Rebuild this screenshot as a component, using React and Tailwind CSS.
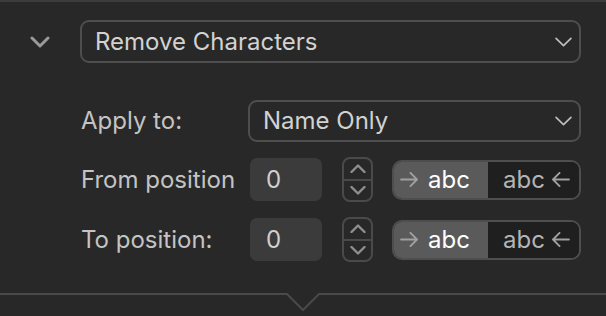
import React from "react";

function ChevronDown({ className }) {
  return (
    <svg viewBox="0 0 16 9" className={className} fill="none">
      <path d="M1 1 L8 8 L15 1" stroke="currentColor" strokeWidth="1.6" strokeLinecap="round" strokeLinejoin="round" />
    </svg>
  );
}

function Select({ label, className }) {
  return (
    <div className={`flex items-center justify-between rounded-[9px] border-2 border-[#4e4e4e] pl-[13px] pr-[7px] ${className}`}>
      <span className="text-[24px] leading-none text-[#d2d2d2]">{label}</span>
      <ChevronDown className="w-[17px] h-[10px] text-[#bdbdbd]" />
    </div>
  );
}

function Stepper() {
  return (
    <div className="flex flex-col w-[31px] h-[45px] rounded-[8px] border-2 border-[#4a4a4a]">
      <div className="flex-1 flex items-center justify-center border-b-2 border-[#4a4a4a]">
        <svg viewBox="0 0 16 9" className="w-[16px] h-[9px] text-[#8f8f8f]" fill="none">
          <path d="M1.5 8 L8 1.5 L14.5 8" stroke="currentColor" strokeWidth="2.4" strokeLinecap="round" strokeLinejoin="round" />
        </svg>
      </div>
      <div className="flex-1 flex items-center justify-center">
        <svg viewBox="0 0 16 9" className="w-[16px] h-[9px] text-[#8f8f8f]" fill="none">
          <path d="M1.5 1 L8 7.5 L14.5 1" stroke="currentColor" strokeWidth="2.4" strokeLinecap="round" strokeLinejoin="round" />
        </svg>
      </div>
    </div>
  );
}

function ArrowRight({ className }) {
  return (
    <svg viewBox="0 0 20 16" className={className} fill="none">
      <path d="M1 8 H18 M11 1 L18 8 L11 15" stroke="currentColor" strokeWidth="2" strokeLinecap="round" strokeLinejoin="round" />
    </svg>
  );
}

function ArrowLeft({ className }) {
  return (
    <svg viewBox="0 0 20 16" className={className} fill="none">
      <path d="M19 8 H2 M9 1 L2 8 L9 15" stroke="currentColor" strokeWidth="2" strokeLinecap="round" strokeLinejoin="round" />
    </svg>
  );
}

function Segmented() {
  return (
    <div className="flex w-[189px] h-[40px] rounded-[10px] border-2 border-[#4e4e4e] overflow-hidden">
      <div className="w-[94px] bg-[#5a5a5a] flex items-center pl-[6px] gap-[9px]">
        <ArrowRight className="w-[19px] h-[15px] text-[#a0a0a0]" />
        <span className="text-[24px] leading-none text-white">abc</span>
      </div>
      <div className="flex-1 bg-[#1f1f1f] flex items-center pl-[15px] gap-[6px]">
        <span className="text-[24px] leading-none text-[#b4b4b4]">abc</span>
        <ArrowLeft className="w-[19px] h-[15px] text-[#a0a0a0]" />
      </div>
    </div>
  );
}

function PositionRow({ label }) {
  return (
    <div className="flex items-center h-[45px]">
      <span className="w-[169px] text-[24px] leading-none text-[#c4c4c4]">{label}</span>
      <div className="w-[72px] h-[43px] rounded-[7px] bg-[#3b3b3b] flex items-center pl-[16px] text-[24px] leading-none text-[#cfcfcf]">
        0
      </div>
      <div className="ml-[20px]">
        <Stepper />
      </div>
      <div className="ml-[19px]">
        <Segmented />
      </div>
    </div>
  );
}

export default function App() {
  return (
    <div
      className="w-[606px] h-[316px] bg-[#282828] overflow-hidden border-t-2 border-[#3c3c3c]"
      style={{ fontFamily: "Inter, 'Noto Sans', sans-serif" }}
    >
      <div className="flex items-center mt-[18px] h-[43px]">
        <div className="w-[80px] flex justify-start pl-[30px]">
          <svg viewBox="0 0 20 12" className="w-[20px] h-[12px] text-[#9a9a9a]" fill="none">
            <path d="M2 2 L10 10 L18 2" stroke="currentColor" strokeWidth="3" strokeLinecap="round" strokeLinejoin="round" />
          </svg>
        </div>
        <Select label="Remove Characters" className="w-[501px] h-[43px]" />
      </div>

      <div className="pl-[81px] mt-[37px] flex flex-col">
        <div className="flex items-center h-[42px]">
          <span className="w-[167px] text-[24px] leading-none text-[#c4c4c4]">Apply to:</span>
          <Select label="Name Only" className="w-[333px] h-[42px]" />
        </div>
        <div className="mt-[15px] flex flex-col gap-[15px]">
          <PositionRow label="From position" />
          <PositionRow label="To position:" />
        </div>
      </div>

      <svg viewBox="0 0 606 20" className="block w-[606px] h-[20px] mt-[31px]" fill="none">
        <polyline points="0,1 287,1 303,17 319,1 606,1" stroke="#4a4a4a" strokeWidth="2" />
      </svg>
    </div>
  );
}
